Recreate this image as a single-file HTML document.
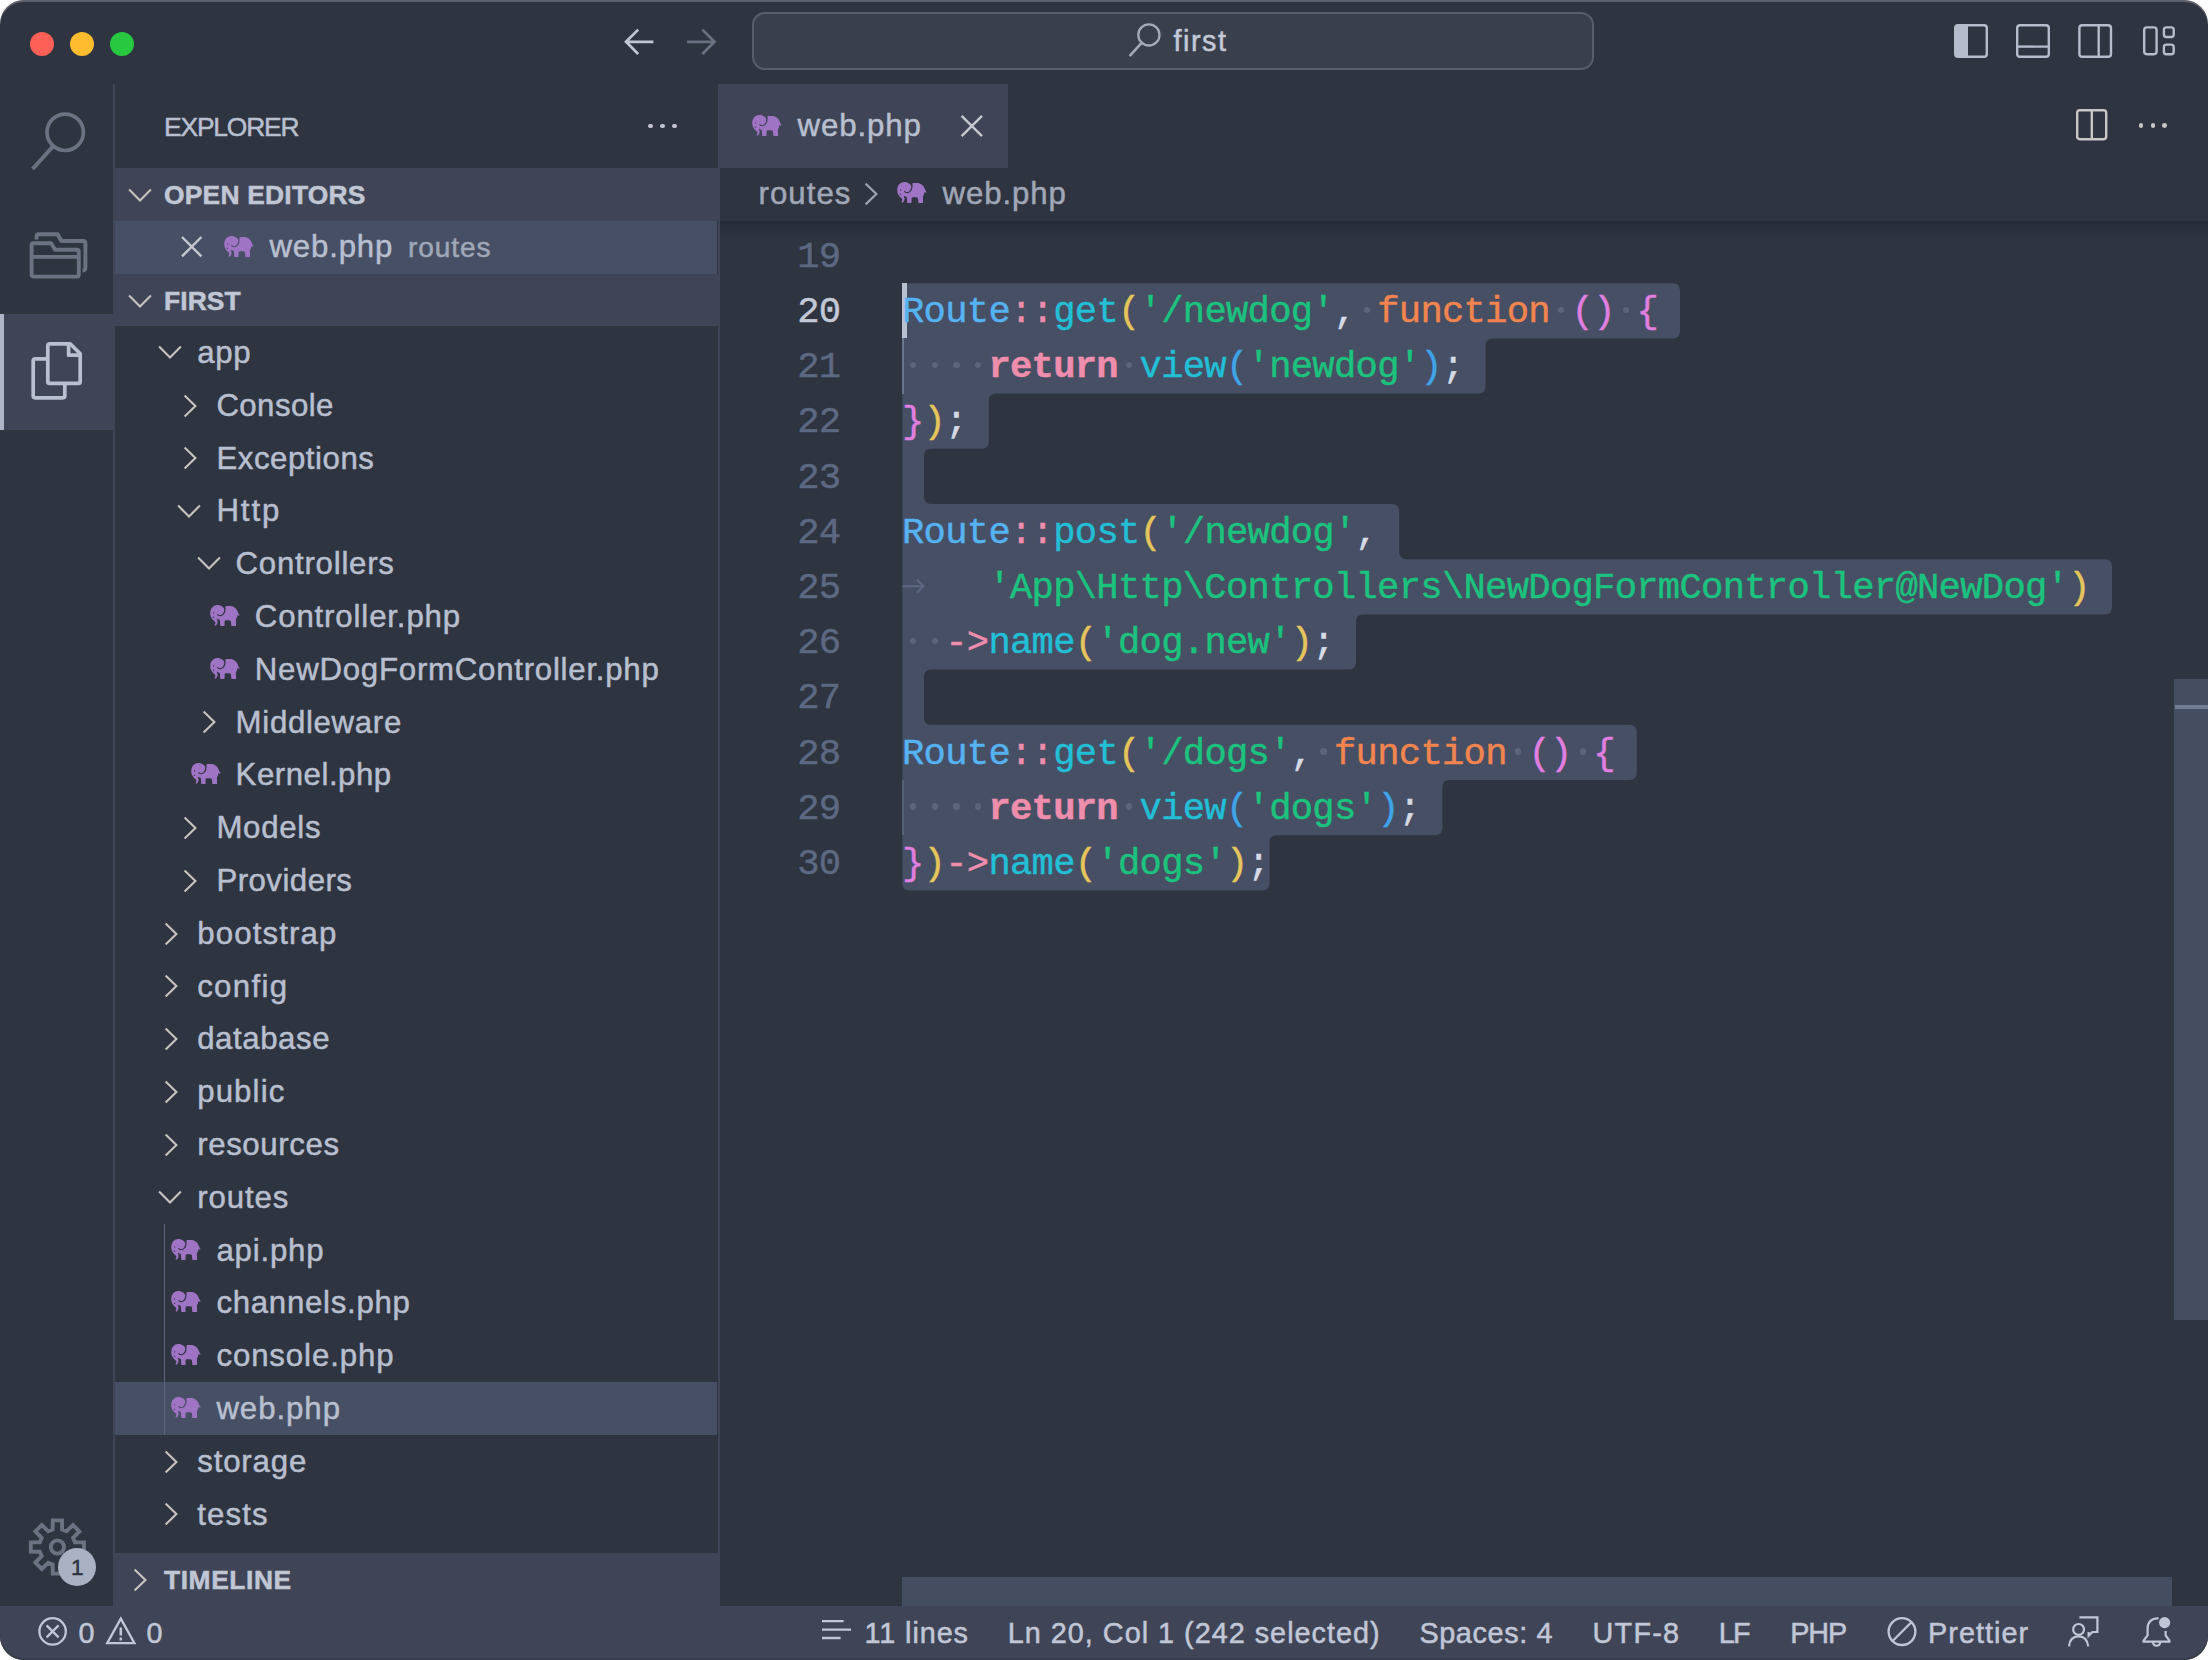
<!DOCTYPE html>
<html lang="en"><head><meta charset="utf-8"><title>web.php — first</title>
<style>
html,body{margin:0;padding:0;background:#fff;}
body{width:2208px;height:1660px;overflow:hidden;position:relative;font-family:"Liberation Sans", sans-serif;}
#win{position:absolute;left:0;top:0;width:2208px;height:1660px;background:#2e3440;border-radius:24px;overflow:hidden;}
#win div,#win span.t,#win svg{position:absolute;}
span.t{white-space:pre;line-height:normal;font-family:"Liberation Sans", sans-serif;-webkit-text-stroke:0.5px currentColor;}
span.m{font-family:"Liberation Mono", monospace;-webkit-text-stroke:0.45px currentColor;}
svg{overflow:visible}
</style></head><body><div id="win">
<div style="left:30px;top:32px;width:24px;height:24px;border-radius:50%;background:#fe5f57"></div>
<div style="left:70px;top:32px;width:24px;height:24px;border-radius:50%;background:#febc2e"></div>
<div style="left:110px;top:32px;width:24px;height:24px;border-radius:50%;background:#28c840"></div>
<svg style="left:620px;top:24px;" width="40" height="36" viewBox="0 0 40 36"><path d="M33.4 17.8 H6 M18.2 5.6 L6 17.8 L18.2 30" fill="none" stroke="#c0c6d4" stroke-width="2.7"/></svg>
<svg style="left:683px;top:24px;" width="40" height="36" viewBox="0 0 40 36"><path d="M4 17.8 H31.6 M19.4 5.6 L31.6 17.8 L19.4 30" fill="none" stroke="#697080" stroke-width="2.7"/></svg>
<div style="left:752px;top:12px;width:838px;height:54px;border:2px solid #575d6a;border-radius:13px;background:#3a3f4c"></div>
<svg style="left:1124px;top:20px;" width="40" height="40" viewBox="0 0 40 40"><circle cx="24.9" cy="14.9" r="10.6" fill="none" stroke="#a4aab8" stroke-width="2.3"/><path d="M17.6 22.9 L5.6 36.2" stroke="#a4aab8" stroke-width="2.6"/></svg>
<svg style="left:1952px;top:22px;" width="38" height="38" viewBox="0 0 38 38"><rect x="3.2" y="3.2" width="31.6" height="31.6" rx="2.8" fill="none" stroke="#b5bccb" stroke-width="2.4"/><path d="M3.2 5 Q3.2 3.2 5 3.2 H16 V34.8 H5 Q3.2 34.8 3.2 33 Z" fill="#b5bccb"/></svg>
<svg style="left:2014px;top:22px;" width="38" height="38" viewBox="0 0 38 38"><rect x="3.2" y="3.2" width="31.6" height="31.6" rx="2.8" fill="none" stroke="#b5bccb" stroke-width="2.4"/><path d="M3.2 24.6 H34.8" stroke="#b5bccb" stroke-width="2.4"/></svg>
<svg style="left:2076px;top:22px;" width="38" height="38" viewBox="0 0 38 38"><rect x="3.4" y="3.2" width="31.6" height="31.6" rx="2.8" fill="none" stroke="#b5bccb" stroke-width="2.4"/><path d="M22.7 3.2 V34.8" stroke="#b5bccb" stroke-width="2.4"/></svg>
<svg style="left:2140px;top:22px;" width="38" height="38" viewBox="0 0 38 38"><rect x="4.2" y="5.4" width="12.4" height="26.8" rx="2.6" fill="none" stroke="#b5bccb" stroke-width="2.4"/><rect x="23.9" y="5.4" width="9.8" height="9.6" rx="2.4" fill="none" stroke="#b5bccb" stroke-width="2.4"/><rect x="23.9" y="22.6" width="9.8" height="9.6" rx="2.4" fill="none" stroke="#b5bccb" stroke-width="2.4"/></svg>
<div style="left:112.8px;top:84px;width:2.4px;height:1522px;background:#3f4556;"></div>
<div style="left:0px;top:314.4px;width:112.8px;height:115.2px;background:#3f4556;"></div>
<div style="left:0px;top:314.4px;width:4.2px;height:115.2px;background:#aeb5c6;"></div>
<svg style="left:26px;top:108px;" width="64" height="64" viewBox="0 0 64 64"><circle cx="39.2" cy="24.3" r="18.2" fill="none" stroke="#6b7383" stroke-width="3.7"/><path d="M27 38.4 L6.6 61" stroke="#6b7383" stroke-width="3.9"/></svg>
<svg style="left:26px;top:228px;" width="64" height="56" viewBox="0 0 64 56"><g fill="none" stroke="#6b7383" stroke-width="3.9" stroke-linejoin="round"><path d="M10.6 11.4 V8.2 Q10.6 6.2 12.6 6.2 H31.6 L35.4 13 H57 Q59.4 13 59.4 15.4 V39.6 Q59.4 42.4 56.6 42.6"/><path d="M5.6 17.2 Q5.6 15.2 7.6 15.2 H25.2 L29 21.7 H50.6 Q52.8 21.7 52.8 23.9 V46.4 Q52.8 48.6 50.6 48.6 H7.8 Q5.6 48.6 5.6 46.4 Z"/><path d="M5.6 28.9 H52.8"/></g></svg>
<svg style="left:26px;top:338px;" width="64" height="68" viewBox="0 0 64 68"><g fill="none" stroke="#b9c0d0" stroke-width="3.7" stroke-linejoin="round"><path d="M21.8 7.8 Q21.8 5.8 23.8 5.8 H44.2 L54.2 15.8 V43.4 Q54.2 45.4 52.2 45.4 H23.8 Q21.8 45.4 21.8 43.4 Z"/><path d="M42.6 6.4 V17.2 H53.6"/><path d="M21.4 20.8 H9.2 Q7.2 20.8 7.2 22.8 V57.8 Q7.2 59.8 9.2 59.8 H36.8 Q38.8 59.8 38.8 57.8 V45.8"/></g></svg>
<svg style="left:24px;top:1514px;" width="68" height="68" viewBox="0 0 68 68"><path d="M28.7 15.4 L28.8 6.4 L38.0 6.4 L38.1 15.4 L42.5 17.3 L49.0 11.0 L55.4 17.4 L49.1 23.9 L51.0 28.3 L60.0 28.4 L60.0 37.6 L51.0 37.7 L49.1 42.1 L55.4 48.6 L49.0 55.0 L42.5 48.7 L38.1 50.6 L38.0 59.6 L28.8 59.6 L28.7 50.6 L24.3 48.7 L17.8 55.0 L11.4 48.6 L17.7 42.1 L15.8 37.7 L6.8 37.6 L6.8 28.4 L15.8 28.3 L17.7 23.9 L11.4 17.4 L17.8 11.0 L24.3 17.3Z" fill="none" stroke="#6b7383" stroke-width="3.9" stroke-linejoin="miter"/><circle cx="33.4" cy="33" r="6.6" fill="none" stroke="#6b7383" stroke-width="3.9"/></svg>
<div style="left:58px;top:1548px;width:38px;height:38px;border-radius:50%;background:#aab1c3"></div>
<div style="left:717.9px;top:84px;width:2.1px;height:1522px;background:#3f4556;"></div>
<div style="left:648.3px;top:123.6px;width:4.8px;height:4.8px;border-radius:50%;background:#c3c6cf"></div>
<div style="left:660.3px;top:123.6px;width:4.8px;height:4.8px;border-radius:50%;background:#c3c6cf"></div>
<div style="left:672.3px;top:123.6px;width:4.8px;height:4.8px;border-radius:50%;background:#c3c6cf"></div>
<div style="left:115.2px;top:168px;width:604.8px;height:52.8px;background:#3f4556;"></div>
<svg style="left:126px;top:182.6px;" width="28" height="24" viewBox="0 0 28 24"><polyline points="3.0999999999999996,6.6 14,17.4 24.9,6.6" fill="none" stroke="#c6c4be" stroke-width="2.1"/></svg>
<div style="left:115.2px;top:220.8px;width:601.6px;height:52.8px;background:#464f64;"></div>
<svg style="left:180px;top:235px;" width="24" height="24" viewBox="0 0 24 24"><path d="M2 2 L21.4 21.4 M21.4 2 L2 21.4" stroke="#c6c9d2" stroke-width="2.4" fill="none"/></svg>
<svg style="left:224.2px;top:236px;" width="30" height="22" viewBox="0 0 30 22"><path d="M7.2 0.1 C11.4 0.1 13.9 2.4 14.6 5.2 C14.9 3.6 15 2.4 14.9 1.3 C16.6 1.1 18.6 1 20.6 1.1 C24.6 1.4 27.3 4.6 28.3 8 C28.7 9 29.3 9.9 29.9 10.6 C29 10.7 28.1 10.4 27.5 9.9 C27.3 11.6 26.6 13.2 25.9 14.4 L26.1 21.1 L21.4 21.1 L20.9 16.2 C20.3 15.4 19.6 15.2 18.9 15.2 L15.8 15.3 C15.1 15.4 14.7 15.8 14.6 16.4 L14.5 21.1 L10.3 21.1 L9.8 15 C8.7 14.4 7.6 13.9 6.6 13.7 C7.6 15.3 7.9 17.2 7.3 18.6 C6.9 19.6 6.3 20.4 5.6 20.8 L4.4 19.9 C5.2 19 5.6 17.9 5.2 16.9 C4.3 15.8 2.6 14.6 1.5 12.9 C0.5 11.3 0.1 9.3 0.3 7.2 C0.7 3 3.6 0.1 7.2 0.1 Z" fill="#a074c4"/><path d="M14.9 1.2 C15.4 5.2 14.6 8.2 12.4 9.9 C10.9 11 9.1 11 7.7 9.6" fill="none" stroke="#464f64" stroke-width="1.15" stroke-linecap="round"/><circle cx="3.6" cy="7.9" r="0.62" fill="#464f64"/><path d="M2.4 12.9 L3.9 11.3 L4.4 12.4 Z" fill="#464f64"/></svg>
<div style="left:115.2px;top:273.6px;width:604.8px;height:52.8px;background:#3f4556;"></div>
<svg style="left:126px;top:288.6px;" width="28" height="24" viewBox="0 0 28 24"><polyline points="3.0999999999999996,6.6 14,17.4 24.9,6.6" fill="none" stroke="#c6c4be" stroke-width="2.1"/></svg>
<div style="left:115.2px;top:1553px;width:604.8px;height:53px;background:#3f4556;"></div>
<svg style="left:128px;top:1566.2px;" width="24" height="28" viewBox="0 0 24 28"><polyline points="6.6,3.5999999999999996 17.4,14 6.6,24.4" fill="none" stroke="#c6c4be" stroke-width="2.1"/></svg>
<svg style="left:156.1px;top:340.19999999999993px;" width="28" height="24" viewBox="0 0 28 24"><polyline points="3.0999999999999996,6.6 14,17.4 24.9,6.6" fill="none" stroke="#c6c4be" stroke-width="2.1"/></svg>
<svg style="left:177.89999999999998px;top:391.59999999999997px;" width="24" height="28" viewBox="0 0 24 28"><polyline points="6.6,3.5999999999999996 17.4,14 6.6,24.4" fill="none" stroke="#c6c4be" stroke-width="2.1"/></svg>
<svg style="left:177.89999999999998px;top:444.4px;" width="24" height="28" viewBox="0 0 24 28"><polyline points="6.6,3.5999999999999996 17.4,14 6.6,24.4" fill="none" stroke="#c6c4be" stroke-width="2.1"/></svg>
<svg style="left:175.29999999999998px;top:498.5999999999999px;" width="28" height="24" viewBox="0 0 28 24"><polyline points="3.0999999999999996,6.6 14,17.4 24.9,6.6" fill="none" stroke="#c6c4be" stroke-width="2.1"/></svg>
<svg style="left:194.5px;top:551.3999999999999px;" width="28" height="24" viewBox="0 0 28 24"><polyline points="3.0999999999999996,6.6 14,17.4 24.9,6.6" fill="none" stroke="#c6c4be" stroke-width="2.1"/></svg>
<svg style="left:209.79999999999998px;top:604.9px;" width="30" height="22" viewBox="0 0 30 22"><path d="M7.2 0.1 C11.4 0.1 13.9 2.4 14.6 5.2 C14.9 3.6 15 2.4 14.9 1.3 C16.6 1.1 18.6 1 20.6 1.1 C24.6 1.4 27.3 4.6 28.3 8 C28.7 9 29.3 9.9 29.9 10.6 C29 10.7 28.1 10.4 27.5 9.9 C27.3 11.6 26.6 13.2 25.9 14.4 L26.1 21.1 L21.4 21.1 L20.9 16.2 C20.3 15.4 19.6 15.2 18.9 15.2 L15.8 15.3 C15.1 15.4 14.7 15.8 14.6 16.4 L14.5 21.1 L10.3 21.1 L9.8 15 C8.7 14.4 7.6 13.9 6.6 13.7 C7.6 15.3 7.9 17.2 7.3 18.6 C6.9 19.6 6.3 20.4 5.6 20.8 L4.4 19.9 C5.2 19 5.6 17.9 5.2 16.9 C4.3 15.8 2.6 14.6 1.5 12.9 C0.5 11.3 0.1 9.3 0.3 7.2 C0.7 3 3.6 0.1 7.2 0.1 Z" fill="#a074c4"/><path d="M14.9 1.2 C15.4 5.2 14.6 8.2 12.4 9.9 C10.9 11 9.1 11 7.7 9.6" fill="none" stroke="#2e3440" stroke-width="1.15" stroke-linecap="round"/><circle cx="3.6" cy="7.9" r="0.62" fill="#2e3440"/><path d="M2.4 12.9 L3.9 11.3 L4.4 12.4 Z" fill="#2e3440"/></svg>
<svg style="left:209.79999999999998px;top:657.6999999999999px;" width="30" height="22" viewBox="0 0 30 22"><path d="M7.2 0.1 C11.4 0.1 13.9 2.4 14.6 5.2 C14.9 3.6 15 2.4 14.9 1.3 C16.6 1.1 18.6 1 20.6 1.1 C24.6 1.4 27.3 4.6 28.3 8 C28.7 9 29.3 9.9 29.9 10.6 C29 10.7 28.1 10.4 27.5 9.9 C27.3 11.6 26.6 13.2 25.9 14.4 L26.1 21.1 L21.4 21.1 L20.9 16.2 C20.3 15.4 19.6 15.2 18.9 15.2 L15.8 15.3 C15.1 15.4 14.7 15.8 14.6 16.4 L14.5 21.1 L10.3 21.1 L9.8 15 C8.7 14.4 7.6 13.9 6.6 13.7 C7.6 15.3 7.9 17.2 7.3 18.6 C6.9 19.6 6.3 20.4 5.6 20.8 L4.4 19.9 C5.2 19 5.6 17.9 5.2 16.9 C4.3 15.8 2.6 14.6 1.5 12.9 C0.5 11.3 0.1 9.3 0.3 7.2 C0.7 3 3.6 0.1 7.2 0.1 Z" fill="#a074c4"/><path d="M14.9 1.2 C15.4 5.2 14.6 8.2 12.4 9.9 C10.9 11 9.1 11 7.7 9.6" fill="none" stroke="#2e3440" stroke-width="1.15" stroke-linecap="round"/><circle cx="3.6" cy="7.9" r="0.62" fill="#2e3440"/><path d="M2.4 12.9 L3.9 11.3 L4.4 12.4 Z" fill="#2e3440"/></svg>
<svg style="left:197.1px;top:708.4px;" width="24" height="28" viewBox="0 0 24 28"><polyline points="6.6,3.5999999999999996 17.4,14 6.6,24.4" fill="none" stroke="#c6c4be" stroke-width="2.1"/></svg>
<svg style="left:190.6px;top:763.3px;" width="30" height="22" viewBox="0 0 30 22"><path d="M7.2 0.1 C11.4 0.1 13.9 2.4 14.6 5.2 C14.9 3.6 15 2.4 14.9 1.3 C16.6 1.1 18.6 1 20.6 1.1 C24.6 1.4 27.3 4.6 28.3 8 C28.7 9 29.3 9.9 29.9 10.6 C29 10.7 28.1 10.4 27.5 9.9 C27.3 11.6 26.6 13.2 25.9 14.4 L26.1 21.1 L21.4 21.1 L20.9 16.2 C20.3 15.4 19.6 15.2 18.9 15.2 L15.8 15.3 C15.1 15.4 14.7 15.8 14.6 16.4 L14.5 21.1 L10.3 21.1 L9.8 15 C8.7 14.4 7.6 13.9 6.6 13.7 C7.6 15.3 7.9 17.2 7.3 18.6 C6.9 19.6 6.3 20.4 5.6 20.8 L4.4 19.9 C5.2 19 5.6 17.9 5.2 16.9 C4.3 15.8 2.6 14.6 1.5 12.9 C0.5 11.3 0.1 9.3 0.3 7.2 C0.7 3 3.6 0.1 7.2 0.1 Z" fill="#a074c4"/><path d="M14.9 1.2 C15.4 5.2 14.6 8.2 12.4 9.9 C10.9 11 9.1 11 7.7 9.6" fill="none" stroke="#2e3440" stroke-width="1.15" stroke-linecap="round"/><circle cx="3.6" cy="7.9" r="0.62" fill="#2e3440"/><path d="M2.4 12.9 L3.9 11.3 L4.4 12.4 Z" fill="#2e3440"/></svg>
<svg style="left:177.89999999999998px;top:813.9999999999999px;" width="24" height="28" viewBox="0 0 24 28"><polyline points="6.6,3.5999999999999996 17.4,14 6.6,24.4" fill="none" stroke="#c6c4be" stroke-width="2.1"/></svg>
<svg style="left:177.89999999999998px;top:866.8px;" width="24" height="28" viewBox="0 0 24 28"><polyline points="6.6,3.5999999999999996 17.4,14 6.6,24.4" fill="none" stroke="#c6c4be" stroke-width="2.1"/></svg>
<svg style="left:158.7px;top:919.5999999999999px;" width="24" height="28" viewBox="0 0 24 28"><polyline points="6.6,3.5999999999999996 17.4,14 6.6,24.4" fill="none" stroke="#c6c4be" stroke-width="2.1"/></svg>
<svg style="left:158.7px;top:972.3999999999999px;" width="24" height="28" viewBox="0 0 24 28"><polyline points="6.6,3.5999999999999996 17.4,14 6.6,24.4" fill="none" stroke="#c6c4be" stroke-width="2.1"/></svg>
<svg style="left:158.7px;top:1025.2px;" width="24" height="28" viewBox="0 0 24 28"><polyline points="6.6,3.5999999999999996 17.4,14 6.6,24.4" fill="none" stroke="#c6c4be" stroke-width="2.1"/></svg>
<svg style="left:158.7px;top:1078.0px;" width="24" height="28" viewBox="0 0 24 28"><polyline points="6.6,3.5999999999999996 17.4,14 6.6,24.4" fill="none" stroke="#c6c4be" stroke-width="2.1"/></svg>
<svg style="left:158.7px;top:1130.8000000000002px;" width="24" height="28" viewBox="0 0 24 28"><polyline points="6.6,3.5999999999999996 17.4,14 6.6,24.4" fill="none" stroke="#c6c4be" stroke-width="2.1"/></svg>
<svg style="left:156.1px;top:1185.0px;" width="28" height="24" viewBox="0 0 28 24"><polyline points="3.0999999999999996,6.6 14,17.4 24.9,6.6" fill="none" stroke="#c6c4be" stroke-width="2.1"/></svg>
<svg style="left:171.39999999999998px;top:1238.5px;" width="30" height="22" viewBox="0 0 30 22"><path d="M7.2 0.1 C11.4 0.1 13.9 2.4 14.6 5.2 C14.9 3.6 15 2.4 14.9 1.3 C16.6 1.1 18.6 1 20.6 1.1 C24.6 1.4 27.3 4.6 28.3 8 C28.7 9 29.3 9.9 29.9 10.6 C29 10.7 28.1 10.4 27.5 9.9 C27.3 11.6 26.6 13.2 25.9 14.4 L26.1 21.1 L21.4 21.1 L20.9 16.2 C20.3 15.4 19.6 15.2 18.9 15.2 L15.8 15.3 C15.1 15.4 14.7 15.8 14.6 16.4 L14.5 21.1 L10.3 21.1 L9.8 15 C8.7 14.4 7.6 13.9 6.6 13.7 C7.6 15.3 7.9 17.2 7.3 18.6 C6.9 19.6 6.3 20.4 5.6 20.8 L4.4 19.9 C5.2 19 5.6 17.9 5.2 16.9 C4.3 15.8 2.6 14.6 1.5 12.9 C0.5 11.3 0.1 9.3 0.3 7.2 C0.7 3 3.6 0.1 7.2 0.1 Z" fill="#a074c4"/><path d="M14.9 1.2 C15.4 5.2 14.6 8.2 12.4 9.9 C10.9 11 9.1 11 7.7 9.6" fill="none" stroke="#2e3440" stroke-width="1.15" stroke-linecap="round"/><circle cx="3.6" cy="7.9" r="0.62" fill="#2e3440"/><path d="M2.4 12.9 L3.9 11.3 L4.4 12.4 Z" fill="#2e3440"/></svg>
<svg style="left:171.39999999999998px;top:1291.3px;" width="30" height="22" viewBox="0 0 30 22"><path d="M7.2 0.1 C11.4 0.1 13.9 2.4 14.6 5.2 C14.9 3.6 15 2.4 14.9 1.3 C16.6 1.1 18.6 1 20.6 1.1 C24.6 1.4 27.3 4.6 28.3 8 C28.7 9 29.3 9.9 29.9 10.6 C29 10.7 28.1 10.4 27.5 9.9 C27.3 11.6 26.6 13.2 25.9 14.4 L26.1 21.1 L21.4 21.1 L20.9 16.2 C20.3 15.4 19.6 15.2 18.9 15.2 L15.8 15.3 C15.1 15.4 14.7 15.8 14.6 16.4 L14.5 21.1 L10.3 21.1 L9.8 15 C8.7 14.4 7.6 13.9 6.6 13.7 C7.6 15.3 7.9 17.2 7.3 18.6 C6.9 19.6 6.3 20.4 5.6 20.8 L4.4 19.9 C5.2 19 5.6 17.9 5.2 16.9 C4.3 15.8 2.6 14.6 1.5 12.9 C0.5 11.3 0.1 9.3 0.3 7.2 C0.7 3 3.6 0.1 7.2 0.1 Z" fill="#a074c4"/><path d="M14.9 1.2 C15.4 5.2 14.6 8.2 12.4 9.9 C10.9 11 9.1 11 7.7 9.6" fill="none" stroke="#2e3440" stroke-width="1.15" stroke-linecap="round"/><circle cx="3.6" cy="7.9" r="0.62" fill="#2e3440"/><path d="M2.4 12.9 L3.9 11.3 L4.4 12.4 Z" fill="#2e3440"/></svg>
<svg style="left:171.39999999999998px;top:1344.1px;" width="30" height="22" viewBox="0 0 30 22"><path d="M7.2 0.1 C11.4 0.1 13.9 2.4 14.6 5.2 C14.9 3.6 15 2.4 14.9 1.3 C16.6 1.1 18.6 1 20.6 1.1 C24.6 1.4 27.3 4.6 28.3 8 C28.7 9 29.3 9.9 29.9 10.6 C29 10.7 28.1 10.4 27.5 9.9 C27.3 11.6 26.6 13.2 25.9 14.4 L26.1 21.1 L21.4 21.1 L20.9 16.2 C20.3 15.4 19.6 15.2 18.9 15.2 L15.8 15.3 C15.1 15.4 14.7 15.8 14.6 16.4 L14.5 21.1 L10.3 21.1 L9.8 15 C8.7 14.4 7.6 13.9 6.6 13.7 C7.6 15.3 7.9 17.2 7.3 18.6 C6.9 19.6 6.3 20.4 5.6 20.8 L4.4 19.9 C5.2 19 5.6 17.9 5.2 16.9 C4.3 15.8 2.6 14.6 1.5 12.9 C0.5 11.3 0.1 9.3 0.3 7.2 C0.7 3 3.6 0.1 7.2 0.1 Z" fill="#a074c4"/><path d="M14.9 1.2 C15.4 5.2 14.6 8.2 12.4 9.9 C10.9 11 9.1 11 7.7 9.6" fill="none" stroke="#2e3440" stroke-width="1.15" stroke-linecap="round"/><circle cx="3.6" cy="7.9" r="0.62" fill="#2e3440"/><path d="M2.4 12.9 L3.9 11.3 L4.4 12.4 Z" fill="#2e3440"/></svg>
<div style="left:115.2px;top:1382.4px;width:601.6px;height:52.8px;background:#464f64;"></div>
<svg style="left:171.39999999999998px;top:1396.9px;" width="30" height="22" viewBox="0 0 30 22"><path d="M7.2 0.1 C11.4 0.1 13.9 2.4 14.6 5.2 C14.9 3.6 15 2.4 14.9 1.3 C16.6 1.1 18.6 1 20.6 1.1 C24.6 1.4 27.3 4.6 28.3 8 C28.7 9 29.3 9.9 29.9 10.6 C29 10.7 28.1 10.4 27.5 9.9 C27.3 11.6 26.6 13.2 25.9 14.4 L26.1 21.1 L21.4 21.1 L20.9 16.2 C20.3 15.4 19.6 15.2 18.9 15.2 L15.8 15.3 C15.1 15.4 14.7 15.8 14.6 16.4 L14.5 21.1 L10.3 21.1 L9.8 15 C8.7 14.4 7.6 13.9 6.6 13.7 C7.6 15.3 7.9 17.2 7.3 18.6 C6.9 19.6 6.3 20.4 5.6 20.8 L4.4 19.9 C5.2 19 5.6 17.9 5.2 16.9 C4.3 15.8 2.6 14.6 1.5 12.9 C0.5 11.3 0.1 9.3 0.3 7.2 C0.7 3 3.6 0.1 7.2 0.1 Z" fill="#a074c4"/><path d="M14.9 1.2 C15.4 5.2 14.6 8.2 12.4 9.9 C10.9 11 9.1 11 7.7 9.6" fill="none" stroke="#464f64" stroke-width="1.15" stroke-linecap="round"/><circle cx="3.6" cy="7.9" r="0.62" fill="#464f64"/><path d="M2.4 12.9 L3.9 11.3 L4.4 12.4 Z" fill="#464f64"/></svg>
<svg style="left:158.7px;top:1447.6px;" width="24" height="28" viewBox="0 0 24 28"><polyline points="6.6,3.5999999999999996 17.4,14 6.6,24.4" fill="none" stroke="#c6c4be" stroke-width="2.1"/></svg>
<svg style="left:158.7px;top:1500.4px;" width="24" height="28" viewBox="0 0 24 28"><polyline points="6.6,3.5999999999999996 17.4,14 6.6,24.4" fill="none" stroke="#c6c4be" stroke-width="2.1"/></svg>
<div style="left:163.5px;top:1224.0px;width:1.9px;height:211.2px;background:#5a647b;"></div>
<div style="left:720px;top:84px;width:288px;height:84px;background:#3f4556;"></div>
<svg style="left:752.4px;top:114.6px;" width="30" height="22" viewBox="0 0 30 22"><path d="M7.2 0.1 C11.4 0.1 13.9 2.4 14.6 5.2 C14.9 3.6 15 2.4 14.9 1.3 C16.6 1.1 18.6 1 20.6 1.1 C24.6 1.4 27.3 4.6 28.3 8 C28.7 9 29.3 9.9 29.9 10.6 C29 10.7 28.1 10.4 27.5 9.9 C27.3 11.6 26.6 13.2 25.9 14.4 L26.1 21.1 L21.4 21.1 L20.9 16.2 C20.3 15.4 19.6 15.2 18.9 15.2 L15.8 15.3 C15.1 15.4 14.7 15.8 14.6 16.4 L14.5 21.1 L10.3 21.1 L9.8 15 C8.7 14.4 7.6 13.9 6.6 13.7 C7.6 15.3 7.9 17.2 7.3 18.6 C6.9 19.6 6.3 20.4 5.6 20.8 L4.4 19.9 C5.2 19 5.6 17.9 5.2 16.9 C4.3 15.8 2.6 14.6 1.5 12.9 C0.5 11.3 0.1 9.3 0.3 7.2 C0.7 3 3.6 0.1 7.2 0.1 Z" fill="#a074c4"/><path d="M14.9 1.2 C15.4 5.2 14.6 8.2 12.4 9.9 C10.9 11 9.1 11 7.7 9.6" fill="none" stroke="#3f4556" stroke-width="1.15" stroke-linecap="round"/><circle cx="3.6" cy="7.9" r="0.62" fill="#3f4556"/><path d="M2.4 12.9 L3.9 11.3 L4.4 12.4 Z" fill="#3f4556"/></svg>
<svg style="left:960px;top:114px;" width="24" height="24" viewBox="0 0 24 24"><path d="M1.6 1.8 L22 22.2 M22 1.8 L1.6 22.2" stroke="#c6c9d2" stroke-width="2.4" fill="none"/></svg>
<svg style="left:2074px;top:107px;" width="36" height="36" viewBox="0 0 36 36"><rect x="3.2" y="3.2" width="29" height="29" rx="2.6" fill="none" stroke="#c7c7c5" stroke-width="2.4"/><path d="M17.8 3.2 V32.2" stroke="#c7c7c5" stroke-width="2.4"/></svg>
<div style="left:2138.5px;top:123.3px;width:4.8px;height:4.8px;border-radius:50%;background:#c7c7c5"></div>
<div style="left:2150.5px;top:123.3px;width:4.8px;height:4.8px;border-radius:50%;background:#c7c7c5"></div>
<div style="left:2162.4px;top:123.3px;width:4.8px;height:4.8px;border-radius:50%;background:#c7c7c5"></div>
<svg style="left:859px;top:180.2px;" width="24" height="28" viewBox="0 0 24 28"><polyline points="6.6,3.5999999999999996 17.4,14 6.6,24.4" fill="none" stroke="#9aa1b0" stroke-width="2.2"/></svg>
<svg style="left:897.4px;top:182.4px;" width="30" height="22" viewBox="0 0 30 22"><path d="M7.2 0.1 C11.4 0.1 13.9 2.4 14.6 5.2 C14.9 3.6 15 2.4 14.9 1.3 C16.6 1.1 18.6 1 20.6 1.1 C24.6 1.4 27.3 4.6 28.3 8 C28.7 9 29.3 9.9 29.9 10.6 C29 10.7 28.1 10.4 27.5 9.9 C27.3 11.6 26.6 13.2 25.9 14.4 L26.1 21.1 L21.4 21.1 L20.9 16.2 C20.3 15.4 19.6 15.2 18.9 15.2 L15.8 15.3 C15.1 15.4 14.7 15.8 14.6 16.4 L14.5 21.1 L10.3 21.1 L9.8 15 C8.7 14.4 7.6 13.9 6.6 13.7 C7.6 15.3 7.9 17.2 7.3 18.6 C6.9 19.6 6.3 20.4 5.6 20.8 L4.4 19.9 C5.2 19 5.6 17.9 5.2 16.9 C4.3 15.8 2.6 14.6 1.5 12.9 C0.5 11.3 0.1 9.3 0.3 7.2 C0.7 3 3.6 0.1 7.2 0.1 Z" fill="#a074c4"/><path d="M14.9 1.2 C15.4 5.2 14.6 8.2 12.4 9.9 C10.9 11 9.1 11 7.7 9.6" fill="none" stroke="#2e3440" stroke-width="1.15" stroke-linecap="round"/><circle cx="3.6" cy="7.9" r="0.62" fill="#2e3440"/><path d="M2.4 12.9 L3.9 11.3 L4.4 12.4 Z" fill="#2e3440"/></svg>
<div style="left:720px;top:220.8px;width:1488px;height:20px;box-shadow:inset 0 14.4px 14.4px -14.4px rgba(10,12,18,0.5)"></div>
<svg style="left:0px;top:0px;" width="2208" height="1660" viewBox="0 0 2208 1660"><path d="M902.4 290.6 Q902.4 283.2 909.8 283.2 L1672.6 283.2 Q1680.0 283.2 1680.0 290.6 L1680.0 331.0 Q1680.0 338.4 1672.6 338.4 L1493.0 338.4 Q1485.6 338.4 1485.6 345.8 L1485.6 386.2 Q1485.6 393.6 1478.2 393.6 L996.2 393.6 Q988.8 393.6 988.8 401.0 L988.8 441.4 Q988.8 448.8 981.4 448.8 L931.4 448.8 Q924.0 448.8 924.0 456.2 L924.0 496.6 Q924.0 504.0 931.4 504.0 L1391.8 504.0 Q1399.2 504.0 1399.2 511.4 L1399.2 551.8 Q1399.2 559.2 1406.6 559.2 L2104.6 559.2 Q2112.0 559.2 2112.0 566.6 L2112.0 607.0 Q2112.0 614.4 2104.6 614.4 L1363.4 614.4 Q1356.0 614.4 1356.0 621.8 L1356.0 662.2 Q1356.0 669.6 1348.6 669.6 L931.4 669.6 Q924.0 669.6 924.0 677.0 L924.0 717.4 Q924.0 724.8 931.4 724.8 L1629.4 724.8 Q1636.8 724.8 1636.8 732.2 L1636.8 772.6 Q1636.8 780.0 1629.4 780.0 L1449.8 780.0 Q1442.4 780.0 1442.4 787.4 L1442.4 827.8 Q1442.4 835.2 1435.0 835.2 L1277.0 835.2 Q1269.6 835.2 1269.6 842.6 L1269.6 883.0 Q1269.6 890.4 1262.2 890.4 L909.8 890.4 Q902.4 890.4 902.4 883.0 Z" fill="#464f64"/></svg>
<div style="left:902.2px;top:282.59999999999997px;width:4.4px;height:55.6px;background:#b9c0d0;"></div>
<div style="left:902.2px;top:338.4px;width:2.3px;height:55.2px;background:#6a7690;"></div>
<div style="left:902.2px;top:780.0px;width:2.3px;height:55.2px;background:#566078;"></div>
<span class="t m" style="left:797.2px;top:235.79px;font-size:37.2px;letter-spacing:-0.72px;color:#5d6882">19</span>
<span class="t m" style="left:797.2px;top:290.99px;font-size:37.2px;letter-spacing:-0.72px;color:#c3c9d6">20</span>
<div style="left:1363.5px;top:306.5px;width:6.6px;height:6.6px;border-radius:50%;background:#5b647a"></div>
<div style="left:1557.9px;top:306.5px;width:6.6px;height:6.6px;border-radius:50%;background:#5b647a"></div>
<div style="left:1622.7px;top:306.5px;width:6.6px;height:6.6px;border-radius:50%;background:#5b647a"></div>
<span class="t m" style="left:902.0px;top:290.99px;font-size:37.2px;letter-spacing:-0.72px"><span style="color:#56b3f2">Route</span><span style="color:#ef8dad">::</span><span style="color:#22bfd6">get</span><span style="color:#e6c65c">(</span><span style="color:#1cc37e">&#x27;/newdog&#x27;</span><span style="color:#d6dae4">,</span><span style="color:#5b647a"> </span><span style="color:#f2854f">function</span><span style="color:#5b647a"> </span><span style="color:#e07fe0">()</span><span style="color:#5b647a"> </span><span style="color:#e07fe0">{</span></span>
<span class="t m" style="left:797.2px;top:346.19px;font-size:37.2px;letter-spacing:-0.72px;color:#5d6882">21</span>
<div style="left:909.9px;top:361.7px;width:6.6px;height:6.6px;border-radius:50%;background:#5b647a"></div>
<div style="left:931.5px;top:361.7px;width:6.6px;height:6.6px;border-radius:50%;background:#5b647a"></div>
<div style="left:953.1px;top:361.7px;width:6.6px;height:6.6px;border-radius:50%;background:#5b647a"></div>
<div style="left:974.7px;top:361.7px;width:6.6px;height:6.6px;border-radius:50%;background:#5b647a"></div>
<div style="left:1125.9px;top:361.7px;width:6.6px;height:6.6px;border-radius:50%;background:#5b647a"></div>
<span class="t m" style="left:902.0px;top:346.19px;font-size:37.2px;letter-spacing:-0.72px"><span style="color:#5b647a">    </span><span style="color:#ef8dad;font-weight:700">return</span><span style="color:#5b647a"> </span><span style="color:#22bfd6">view</span><span style="color:#3fa4e8">(</span><span style="color:#1cc37e">&#x27;newdog&#x27;</span><span style="color:#3fa4e8">)</span><span style="color:#d6dae4">;</span></span>
<span class="t m" style="left:797.2px;top:401.39px;font-size:37.2px;letter-spacing:-0.72px;color:#5d6882">22</span>
<span class="t m" style="left:902.0px;top:401.39px;font-size:37.2px;letter-spacing:-0.72px"><span style="color:#e07fe0">}</span><span style="color:#e6c65c">)</span><span style="color:#d6dae4">;</span></span>
<span class="t m" style="left:797.2px;top:456.59px;font-size:37.2px;letter-spacing:-0.72px;color:#5d6882">23</span>
<span class="t m" style="left:797.2px;top:511.79px;font-size:37.2px;letter-spacing:-0.72px;color:#5d6882">24</span>
<span class="t m" style="left:902.0px;top:511.79px;font-size:37.2px;letter-spacing:-0.72px"><span style="color:#56b3f2">Route</span><span style="color:#ef8dad">::</span><span style="color:#22bfd6">post</span><span style="color:#e6c65c">(</span><span style="color:#1cc37e">&#x27;/newdog&#x27;</span><span style="color:#d6dae4">,</span></span>
<span class="t m" style="left:797.2px;top:566.99px;font-size:37.2px;letter-spacing:-0.72px;color:#5d6882">25</span>
<svg style="left:902px;top:577.2px;" width="24" height="20" viewBox="0 0 24 20"><path d="M0.4 9.2 H21.6 M15 2.8 L21.6 9.2 L15 15.6" fill="none" stroke="#5d6780" stroke-width="2"/></svg>
<span class="t m" style="left:902.0px;top:566.99px;font-size:37.2px;letter-spacing:-0.72px"><span style="color:#5b647a">    </span><span style="color:#1cc37e">&#x27;App\Http\Controllers\NewDogFormController@NewDog&#x27;</span><span style="color:#e6c65c">)</span></span>
<span class="t m" style="left:797.2px;top:622.19px;font-size:37.2px;letter-spacing:-0.72px;color:#5d6882">26</span>
<div style="left:909.9px;top:637.7px;width:6.6px;height:6.6px;border-radius:50%;background:#5b647a"></div>
<div style="left:931.5px;top:637.7px;width:6.6px;height:6.6px;border-radius:50%;background:#5b647a"></div>
<span class="t m" style="left:902.0px;top:622.19px;font-size:37.2px;letter-spacing:-0.72px"><span style="color:#5b647a">  </span><span style="color:#ef8dad">-&gt;</span><span style="color:#22bfd6">name</span><span style="color:#e6c65c">(</span><span style="color:#1cc37e">&#x27;dog.new&#x27;</span><span style="color:#e6c65c">)</span><span style="color:#d6dae4">;</span></span>
<span class="t m" style="left:797.2px;top:677.39px;font-size:37.2px;letter-spacing:-0.72px;color:#5d6882">27</span>
<span class="t m" style="left:797.2px;top:732.59px;font-size:37.2px;letter-spacing:-0.72px;color:#5d6882">28</span>
<div style="left:1320.3px;top:748.1px;width:6.6px;height:6.6px;border-radius:50%;background:#5b647a"></div>
<div style="left:1514.7px;top:748.1px;width:6.6px;height:6.6px;border-radius:50%;background:#5b647a"></div>
<div style="left:1579.5px;top:748.1px;width:6.6px;height:6.6px;border-radius:50%;background:#5b647a"></div>
<span class="t m" style="left:902.0px;top:732.59px;font-size:37.2px;letter-spacing:-0.72px"><span style="color:#56b3f2">Route</span><span style="color:#ef8dad">::</span><span style="color:#22bfd6">get</span><span style="color:#e6c65c">(</span><span style="color:#1cc37e">&#x27;/dogs&#x27;</span><span style="color:#d6dae4">,</span><span style="color:#5b647a"> </span><span style="color:#f2854f">function</span><span style="color:#5b647a"> </span><span style="color:#e07fe0">()</span><span style="color:#5b647a"> </span><span style="color:#e07fe0">{</span></span>
<span class="t m" style="left:797.2px;top:787.79px;font-size:37.2px;letter-spacing:-0.72px;color:#5d6882">29</span>
<div style="left:909.9px;top:803.3px;width:6.6px;height:6.6px;border-radius:50%;background:#5b647a"></div>
<div style="left:931.5px;top:803.3px;width:6.6px;height:6.6px;border-radius:50%;background:#5b647a"></div>
<div style="left:953.1px;top:803.3px;width:6.6px;height:6.6px;border-radius:50%;background:#5b647a"></div>
<div style="left:974.7px;top:803.3px;width:6.6px;height:6.6px;border-radius:50%;background:#5b647a"></div>
<div style="left:1125.9px;top:803.3px;width:6.6px;height:6.6px;border-radius:50%;background:#5b647a"></div>
<span class="t m" style="left:902.0px;top:787.79px;font-size:37.2px;letter-spacing:-0.72px"><span style="color:#5b647a">    </span><span style="color:#ef8dad;font-weight:700">return</span><span style="color:#5b647a"> </span><span style="color:#22bfd6">view</span><span style="color:#3fa4e8">(</span><span style="color:#1cc37e">&#x27;dogs&#x27;</span><span style="color:#3fa4e8">)</span><span style="color:#d6dae4">;</span></span>
<span class="t m" style="left:797.2px;top:842.99px;font-size:37.2px;letter-spacing:-0.72px;color:#5d6882">30</span>
<span class="t m" style="left:902.0px;top:842.99px;font-size:37.2px;letter-spacing:-0.72px"><span style="color:#e07fe0">}</span><span style="color:#e6c65c">)</span><span style="color:#ef8dad">-&gt;</span><span style="color:#22bfd6">name</span><span style="color:#e6c65c">(</span><span style="color:#1cc37e">&#x27;dogs&#x27;</span><span style="color:#e6c65c">)</span><span style="color:#d6dae4">;</span></span>
<div style="left:2174px;top:679px;width:34px;height:641px;background:#454e61;"></div>
<div style="left:2175px;top:705px;width:33px;height:4.4px;background:#717b91;"></div>
<div style="left:902px;top:1577px;width:1270px;height:30px;background:#454e61;"></div>
<div style="left:0px;top:1606px;width:2208px;height:54px;background:#3f4556;"></div>
<svg style="left:36px;top:1615px;" width="34" height="34" viewBox="0 0 34 34"><circle cx="16.6" cy="16.4" r="13.2" fill="none" stroke="#c1c7d6" stroke-width="2.3"/><path d="M10.6 10.4 L22.6 22.4 M22.6 10.4 L10.6 22.4" stroke="#c1c7d6" stroke-width="2.3"/></svg>
<svg style="left:104px;top:1614px;" width="34" height="34" viewBox="0 0 34 34"><path d="M16.8 4.6 L30.4 29.2 H3.2 Z" fill="none" stroke="#c1c7d6" stroke-width="2.3" stroke-linejoin="miter"/><path d="M16.8 13.4 V21.6 M16.8 23.6 V26.4" stroke="#c1c7d6" stroke-width="2.5"/></svg>
<svg style="left:820px;top:1616px;" width="34" height="28" viewBox="0 0 34 28"><path d="M2 5.2 H23.6 M2 13.6 H31 M2 22 H20.6" stroke="#c1c7d6" stroke-width="2.3"/></svg>
<svg style="left:1885px;top:1615px;" width="34" height="34" viewBox="0 0 34 34"><circle cx="17" cy="16.6" r="13.4" fill="none" stroke="#c1c7d6" stroke-width="2.3"/><path d="M7.4 26.2 L26.6 7" stroke="#c1c7d6" stroke-width="2.3"/></svg>
<svg style="left:2066px;top:1614px;" width="36" height="36" viewBox="0 0 36 36"><g fill="none" stroke="#c1c7d6" stroke-width="2.2" stroke-linejoin="miter"><path d="M13.4 3.4 H31.4 V18 H26.4 L22.6 21.8 V18"/><circle cx="12.6" cy="15.4" r="5.4"/><path d="M3 32.4 C3.6 25.6 7.6 22.4 12.6 22.4 C17.6 22.4 21.4 25.6 22.2 32.4"/></g></svg>
<svg style="left:2140px;top:1614px;" width="34" height="36" viewBox="0 0 34 36"><g fill="none" stroke="#c1c7d6" stroke-width="2.2"><path d="M18.6 4.4 C11.6 3.6 7.6 8.4 7.6 14.4 V21.4 L3.6 26.6 V27.6 H29.4 V26.6 L25.6 21.4 V17"/><path d="M13 28 C13.2 33 20 33 20.2 28"/></g><circle cx="24.6" cy="8.6" r="5.6" fill="#c1c7d6"/></svg>
<span class="t" style="left:1173.6px;top:25.14px;font-size:28.8px;color:#c3c9d6;letter-spacing:1.5px;">first</span>
<span class="t" style="left:70.9px;top:1555.04px;font-size:22.5px;color:#2e3440;">1</span>
<span class="t" style="left:164px;top:112.31px;font-size:26.4px;color:#b8bfcf;letter-spacing:-1.16px;">EXPLORER</span>
<span class="t" style="left:164px;top:180.21px;font-size:26.4px;color:#c0c6d4;font-weight:700;letter-spacing:0.22px;">OPEN EDITORS</span>
<span class="t" style="left:269.4px;top:229.16px;font-size:31.2px;color:#b8bfcf;letter-spacing:0.85px;">web.php</span>
<span class="t" style="left:408px;top:231.97px;font-size:28.1px;color:#a0a7b7;letter-spacing:0.9px;">routes</span>
<span class="t" style="left:164px;top:286.21px;font-size:26.4px;color:#c0c6d4;font-weight:700;letter-spacing:0.09px;">FIRST</span>
<span class="t" style="left:164px;top:1565.41px;font-size:26.4px;color:#c0c6d4;font-weight:700;letter-spacing:0.58px;">TIMELINE</span>
<span class="t" style="left:197.2px;top:334.96px;font-size:31.2px;color:#b8bfcf;letter-spacing:0.68px;">app</span>
<span class="t" style="left:216.39999999999998px;top:387.76px;font-size:31.2px;color:#b8bfcf;letter-spacing:0.43px;">Console</span>
<span class="t" style="left:216.39999999999998px;top:440.56px;font-size:31.2px;color:#b8bfcf;letter-spacing:0.55px;">Exceptions</span>
<span class="t" style="left:216.39999999999998px;top:493.36px;font-size:31.2px;color:#b8bfcf;letter-spacing:1.93px;">Http</span>
<span class="t" style="left:235.6px;top:546.16px;font-size:31.2px;color:#b8bfcf;letter-spacing:0.75px;">Controllers</span>
<span class="t" style="left:254.79999999999998px;top:598.96px;font-size:31.2px;color:#b8bfcf;letter-spacing:0.86px;">Controller.php</span>
<span class="t" style="left:254.79999999999998px;top:651.76px;font-size:31.2px;color:#b8bfcf;letter-spacing:0.76px;">NewDogFormController.php</span>
<span class="t" style="left:235.6px;top:704.56px;font-size:31.2px;color:#b8bfcf;letter-spacing:0.69px;">Middleware</span>
<span class="t" style="left:235.6px;top:757.36px;font-size:31.2px;color:#b8bfcf;letter-spacing:0.53px;">Kernel.php</span>
<span class="t" style="left:216.39999999999998px;top:810.16px;font-size:31.2px;color:#b8bfcf;letter-spacing:0.71px;">Models</span>
<span class="t" style="left:216.39999999999998px;top:862.96px;font-size:31.2px;color:#b8bfcf;letter-spacing:0.48px;">Providers</span>
<span class="t" style="left:197.2px;top:915.76px;font-size:31.2px;color:#b8bfcf;letter-spacing:1.14px;">bootstrap</span>
<span class="t" style="left:197.2px;top:968.56px;font-size:31.2px;color:#b8bfcf;letter-spacing:1.33px;">config</span>
<span class="t" style="left:197.2px;top:1021.36px;font-size:31.2px;color:#b8bfcf;letter-spacing:0.57px;">database</span>
<span class="t" style="left:197.2px;top:1074.16px;font-size:31.2px;color:#b8bfcf;letter-spacing:1.12px;">public</span>
<span class="t" style="left:197.2px;top:1126.96px;font-size:31.2px;color:#b8bfcf;letter-spacing:0.62px;">resources</span>
<span class="t" style="left:197.2px;top:1179.76px;font-size:31.2px;color:#b8bfcf;letter-spacing:0.88px;">routes</span>
<span class="t" style="left:216.39999999999998px;top:1232.56px;font-size:31.2px;color:#b8bfcf;letter-spacing:0.81px;">api.php</span>
<span class="t" style="left:216.39999999999998px;top:1285.36px;font-size:31.2px;color:#b8bfcf;letter-spacing:0.73px;">channels.php</span>
<span class="t" style="left:216.39999999999998px;top:1338.16px;font-size:31.2px;color:#b8bfcf;letter-spacing:0.9px;">console.php</span>
<span class="t" style="left:216.39999999999998px;top:1390.96px;font-size:31.2px;color:#b8bfcf;letter-spacing:0.95px;">web.php</span>
<span class="t" style="left:197.2px;top:1443.76px;font-size:31.2px;color:#b8bfcf;letter-spacing:0.86px;">storage</span>
<span class="t" style="left:197.2px;top:1496.56px;font-size:31.2px;color:#b8bfcf;letter-spacing:1.13px;">tests</span>
<span class="t" style="left:797.6px;top:108.26px;font-size:31.2px;color:#b8bfcf;letter-spacing:0.88px;">web.php</span>
<span class="t" style="left:758.6px;top:176.26px;font-size:31.2px;color:#a0a7b7;letter-spacing:1.02px;">routes</span>
<span class="t" style="left:942.6px;top:176.26px;font-size:31.2px;color:#a0a7b7;letter-spacing:0.88px;">web.php</span>
<span class="t" style="left:78.6px;top:1616.74px;font-size:28.8px;color:#c1c7d6;">0</span>
<span class="t" style="left:146.6px;top:1616.74px;font-size:28.8px;color:#c1c7d6;">0</span>
<span class="t" style="left:864.4px;top:1616.74px;font-size:28.8px;color:#c1c7d6;letter-spacing:0.93px;">11 lines</span>
<span class="t" style="left:1007.8px;top:1616.74px;font-size:28.8px;color:#c1c7d6;letter-spacing:1.0px;">Ln 20, Col 1 (242 selected)</span>
<span class="t" style="left:1419.4px;top:1616.74px;font-size:28.8px;color:#c1c7d6;letter-spacing:0.62px;">Spaces: 4</span>
<span class="t" style="left:1592.6px;top:1616.74px;font-size:28.8px;color:#c1c7d6;letter-spacing:1.2px;">UTF-8</span>
<span class="t" style="left:1718.8px;top:1616.74px;font-size:28.8px;color:#c1c7d6;letter-spacing:-1.81px;">LF</span>
<span class="t" style="left:1790.2px;top:1616.74px;font-size:28.8px;color:#c1c7d6;letter-spacing:-1.11px;">PHP</span>
<span class="t" style="left:1928px;top:1616.74px;font-size:28.8px;color:#c1c7d6;letter-spacing:1.05px;">Prettier</span>
<div style="left:0;top:0;width:2208px;height:1660px;border-radius:24px;box-shadow:inset 0 2px 0 0 rgba(255,255,255,0.22), inset 0 -2px 0 0 rgba(0,0,0,0.12);pointer-events:none"></div>
</div></body></html>
